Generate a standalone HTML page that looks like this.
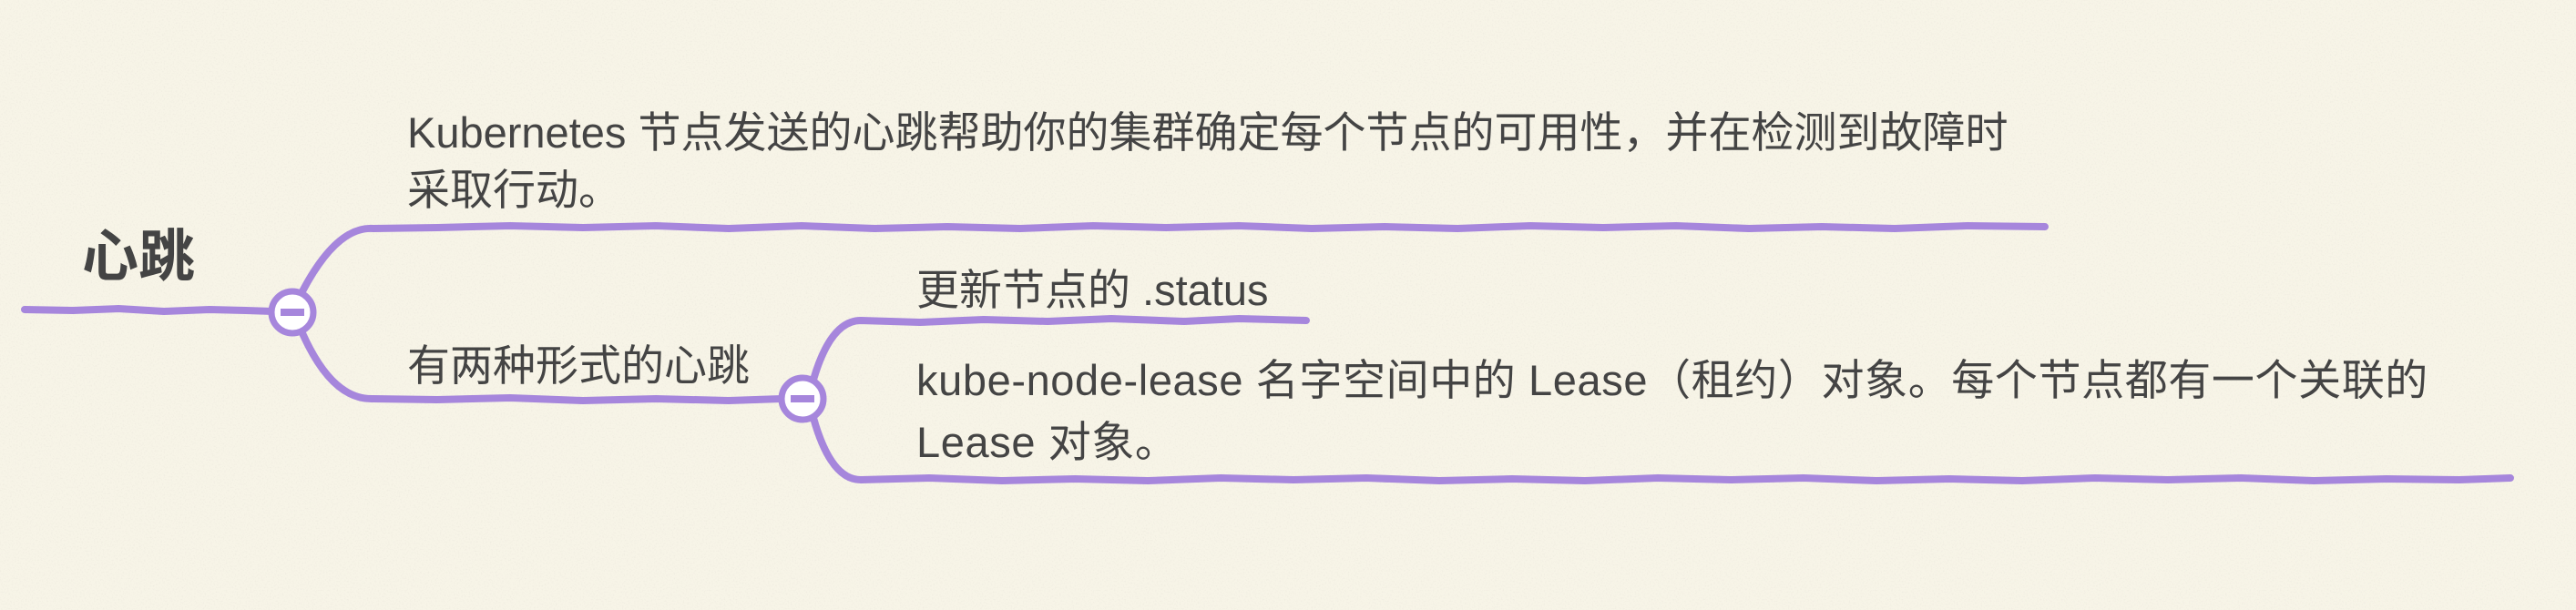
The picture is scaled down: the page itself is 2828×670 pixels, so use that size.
<!DOCTYPE html>
<html><head><meta charset="utf-8"><style>
html,body{margin:0;padding:0}
body{width:2828px;height:670px;background:#f7f4e7;position:relative;overflow:hidden;font-family:"Liberation Sans","Noto Sans CJK SC",sans-serif;color:#444}
svg{position:absolute;left:0;top:0}
.t{position:absolute;font-size:47px;line-height:63px;white-space:nowrap}
</style></head><body>
<svg width="2828" height="670">
<filter id="n"><feTurbulence type="fractalNoise" baseFrequency="0.6" numOctaves="2" seed="3"/><feColorMatrix values="0 0 0 0 0.8  0 0 0 0 0.78  0 0 0 0 0.7  0 0 0 -2.2 1.1"/></filter>
<rect width="2828" height="670" filter="url(#n)" opacity="0.6"/>
<g fill="none" stroke="#a686dc" stroke-width="8" stroke-linecap="round" stroke-linejoin="round">
<path d="M27 340 L80 341 L130 339 L180 342 L230 340 L270 341 L300 342"/>
<path d="M332 320 Q370 248 410 251 L480 250 L560 248 L640 250 L720 248 L800 251 L880 248 L960 251 L1040 249 L1120 251 L1200 248 L1280 250 L1360 248 L1440 251 L1520 249 L1600 251 L1680 248 L1760 250 L1840 248 L1920 251 L2000 249 L2080 251 L2160 248 L2245 249"/>
<path d="M332 366 Q365 440 410 438 L480 439 L560 437 L640 440 L720 438 L800 440 L858 438"/>
<path d="M893 417 Q912 352 945 352 L1010 354 L1080 351 L1150 353 L1220 350 L1300 353 L1360 350 L1434 352"/>
<path d="M893 459 Q912 527 945 527 L1020 525 L1100 528 L1180 526 L1260 528 L1340 525 L1420 527 L1500 525 L1580 528 L1660 526 L1740 528 L1820 525 L1900 527 L1980 525 L2060 528 L2140 526 L2220 528 L2300 525 L2380 527 L2460 525 L2540 528 L2620 526 L2700 527 L2756 525"/>
</g>
<g stroke="#a686dc" stroke-width="7" fill="#fff">
<circle cx="321" cy="343" r="23"/>
<circle cx="881" cy="438" r="23"/>
</g>
<rect x="308" y="339" width="26" height="8" fill="#a686dc"/>
<rect x="868" y="434" width="26" height="8" fill="#a686dc"/>
</svg>
<div class="t" style="left:90px;top:250px;font-size:62px;font-weight:bold;line-height:66px">心跳</div>
<div class="t" style="left:447px;top:114px">Kubernetes 节点发送的心跳帮助你的集群确定每个节点的可用性，并在检测到故障时<br>采取行动。</div>
<div class="t" style="left:447px;top:370px">有两种形式的心跳</div>
<div class="t" style="left:1006px;top:287px">更新节点的 .status</div>
<div class="t" style="left:1006px;top:384px;line-height:68px;letter-spacing:0.6px">kube-node-lease 名字空间中的 Lease（租约）对象。每个节点都有一个关联的<br>Lease 对象。</div>
</body></html>
